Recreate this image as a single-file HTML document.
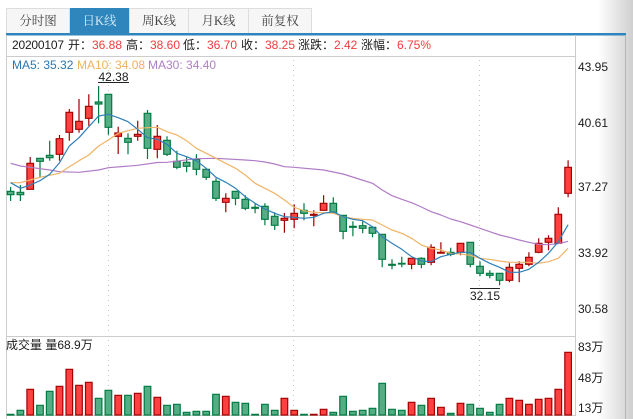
<!DOCTYPE html>
<html><head><meta charset="utf-8"><style>
html,body{margin:0;padding:0;background:#fff}
body{width:633px;height:419px;overflow:hidden;position:relative}
svg{position:absolute;left:0;top:0}
text{font-family:"Liberation Sans","Noto Sans CJK SC",sans-serif;font-size:12px;fill:#1c1c1c}
.t{font-family:"Liberation Serif","Noto Serif CJK SC",serif;font-size:12.5px;fill:#444;text-anchor:middle}
.r{fill:#f03c3c}
</style></head><body>
<svg width="633" height="419" viewBox="0 0 633 419" xmlns="http://www.w3.org/2000/svg">
<defs><linearGradient id="g" x1="0" x2="1" y1="0" y2="0"><stop offset="0" stop-color="#fff"/><stop offset="1" stop-color="#cfcfcf"/></linearGradient></defs>
<rect x="598" y="0" width="35" height="419" fill="url(#g)"/>
<g stroke="#ddd" fill="#f6f6f6">
<rect x="6.5" y="8.5" width="63" height="25"/>
<rect x="129.5" y="8.5" width="59" height="25"/>
<rect x="188.5" y="8.5" width="60" height="25"/>
<rect x="248.5" y="8.5" width="63" height="25"/>
</g>
<rect x="70" y="8" width="59" height="26" fill="#2e86bd"/>
<rect x="6" y="33" width="620" height="2.5" fill="#2e86bd"/>
<path d="M6.5 35V419M575.5 35V416M6 56.5H575M6 336.5H575M6 415.5H575" stroke="#ccc" fill="none"/>
<path d="M625.5 35V419" stroke="#b4b4b4" fill="none"/>
<path d="M108.5 60V333M108.5 340V415M293.5 60V333M293.5 340V415M479.5 60V333M479.5 340V415" stroke="#c4c4c4" stroke-dasharray="1 4" fill="none"/>

<text class="t" x="38" y="25">分时图</text>
<text class="t" x="99.5" y="25" style="fill:#d9ecf7">日K线</text>
<text class="t" x="159" y="25">周K线</text>
<text class="t" x="218.5" y="25">月K线</text>
<text class="t" x="280" y="25">前复权</text>

<text x="12" y="49" textLength="52">20200107</text>
<text x="68" y="49">开：</text><text class="r" x="92" y="49">36.88</text>
<text x="126" y="49">高：</text><text class="r" x="150" y="49">38.60</text>
<text x="183" y="49">低：</text><text class="r" x="207" y="49">36.70</text>
<text x="241" y="49">收：</text><text class="r" x="265" y="49">38.25</text>
<text x="298" y="49">涨跌：</text><text class="r" x="334" y="49">2.42</text>
<text x="361" y="49">涨幅：</text><text class="r" x="397" y="49">6.75%</text>

<text x="12" y="69" style="fill:#2b76ad">MA5: 35.32</text>
<text x="77" y="69" style="fill:#efb25f">MA10: 34.08</text>
<text x="148" y="69" style="fill:#b07fc7">MA30: 34.40</text>

<text x="98.5" y="81">42.38</text>
<path d="M98 82.5H129" stroke="#222"/>
<text x="470" y="300">32.15</text>
<path d="M470 288.5H500" stroke="#222"/>

<text x="578" y="71">43.95</text>
<text x="578" y="127">40.61</text>
<text x="578" y="191">37.27</text>
<text x="578" y="257">33.92</text>
<text x="578" y="313">30.58</text>
<text x="6" y="349">成交量 量68.9万</text>
<text x="578" y="351">83万</text>
<text x="578" y="382">48万</text>
<text x="578" y="412">13万</text>

<!-- red candles -->
<g stroke="#a40000" stroke-width="1.2" fill="#ff4040">
<path d="M30.2 157V189M59.5 135V160.7M69.3 109V140.7M79 99V132.7M88.8 94.3V125.7M118.2 126.7V154M137.7 120.7V140.7M157.3 125V158.3M225.8 193.3V212.3M284.4 213V232.7M294.2 204.3V228.3M313.8 210.3V226.3M323.6 195.3V210.3M411.6 258.3V269.3M431.1 244.3V265.3M440.9 242.3V253.3M460.5 243.3V255.3M509.4 263.3V282.3M519.2 261.3V282.3M528.9 252.3V266.3M538.7 238.3V253.3M548.5 235.3V250.3M558.3 207.3V243.3M568.1 160.3V197.3"/>
<path d="M26.9 163.3h6.6v26h-6.6zM56.2 138.7h6.6v15.6h-6.6zM66 112.3h6.6v20h-6.6zM75.7 121.3h6.6v8h-6.6zM85.5 106.3h6.6v12h-6.6zM114.9 133h6.6v3.3h-6.6zM134.4 134.3h6.6v2h-6.6zM154 136.3h6.6v13h-6.6zM222.5 198.3h6.6v4h-6.6zM281.1 218.3h6.6v2h-6.6zM290.9 213.3h6.6v6h-6.6zM310.5 214.3h6.6v1h-6.6zM320.3 203.3h6.6v7h-6.6zM408.3 258.3h6.6v6h-6.6zM427.8 247.3h6.6v15h-6.6zM437.6 252.3h6.6v.8h-6.6zM457.2 243.3h6.6v9h-6.6zM506.1 267.3h6.6v13h-6.6zM515.9 264.3h6.6v4h-6.6zM525.6 257.3h6.6v7h-6.6zM535.4 243.3h6.6v9h-6.6zM545.2 238.3h6.6v4h-6.6zM555 214.3h6.6v29h-6.6zM564.8 167.3h6.6v26h-6.6z"/>
<!-- red volume -->
<path d="M26.9 389.3h6.6V415h-6.6zM56.2 386.3h6.6V415h-6.6zM66 369.3h6.6V415h-6.6zM75.7 385.3h6.6V415h-6.6zM85.5 382.3h6.6V415h-6.6zM114.9 395.3h6.6V415h-6.6zM134.4 393.3h6.6V415h-6.6zM154 397.3h6.6V415h-6.6zM222.5 396.3h6.6V415h-6.6zM281.1 398.3h6.6V415h-6.6zM290.9 410.3h6.6V415h-6.6zM310.5 414.3h6.6V415h-6.6zM320.3 409.3h6.6V415h-6.6zM408.3 402.3h6.6V415h-6.6zM427.8 398.3h6.6V415h-6.6zM437.6 407.3h6.6V415h-6.6zM457.2 403.3h6.6V415h-6.6zM506.1 398.3h6.6V415h-6.6zM515.9 400.3h6.6V415h-6.6zM525.6 404.3h6.6V415h-6.6zM535.4 399.3h6.6V415h-6.6zM545.2 398.3h6.6V415h-6.6zM555 389.3h6.6V415h-6.6zM564.8 352.3h6.6V415h-6.6z"/>
</g>
<!-- green candles -->
<g stroke="#007a40" stroke-width="1.2" fill="#55ad85">
<path d="M10.6 187V201M20.4 185V201M40 158V177M49.7 140.7V160.7M98.6 86V123.3M108.4 94.3V134.7M128 133.3V154.3M147.5 110V159M167 136.3V156M176.9 150.7V169.3M186.6 157.3V172.3M196.4 154.3V175.3M206.2 168.3V180M216 178.3V201M235.5 191V205.3M245.3 195.3V210.3M255.1 203.3V213.3M264.9 203.3V225.3M274.7 212.3V230M304 203.3V220.3M333.3 197.3V213.3M343.1 215.3V239.3M352.9 221.3V236.3M362.7 221.3V233.3M372.5 227.3V237.3M382.2 234.3V267.3M392 259.3V269.3M401.8 256.7V267.3M421.4 257.3V268.3M450.7 247.7V256.3M470.3 242.3V267.3M480 261.3V276.3M489.8 270.3V278.3M499.6 273.3V285.3"/>
<path d="M7.3 191.3h6.6v3.4h-6.6zM17.1 192.3h6.6v2.4h-6.6zM36.7 158.3h6.6v3h-6.6zM46.4 155.3h6.6v2.4h-6.6zM95.3 102h6.6v2h-6.6zM105.1 94.3h6.6v33h-6.6zM124.7 138.3h6.6v4h-6.6zM144.2 113.3h6.6v35h-6.6zM163.7 140.3h6.6v14h-6.6zM173.6 161.3h6.6v6h-6.6zM183.3 162.3h6.6v4h-6.6zM193.1 159.3h6.6v10h-6.6zM202.9 169.3h6.6v8h-6.6zM212.7 181.3h6.6v17h-6.6zM232.2 191.3h6.6v7h-6.6zM242 199.3h6.6v9h-6.6zM251.8 207.3h6.6v1h-6.6zM261.6 206.3h6.6v13h-6.6zM271.4 216.3h6.6v9h-6.6zM300.7 210.3h6.6v3h-6.6zM330 203.3h6.6v9h-6.6zM339.8 215.3h6.6v16h-6.6zM349.6 226.3h6.6v1h-6.6zM359.4 225.7h6.6v2.6h-6.6zM369.2 227.3h6.6v6h-6.6zM378.9 234.3h6.6v25h-6.6zM388.7 264.3h6.6v1h-6.6zM398.5 263.3h6.6v.7h-6.6zM418.1 258.3h6.6v6h-6.6zM447.4 252.3h6.6v2h-6.6zM467 242.3h6.6v22h-6.6zM476.7 266.3h6.6v7h-6.6zM486.5 273.3h6.6v2h-6.6zM496.3 273.3h6.6v7h-6.6z"/>
<!-- green volume -->
<path d="M7.3 414.3h6.6V415h-6.6zM17.1 410.3h6.6V415h-6.6zM36.7 405.3h6.6V415h-6.6zM46.4 391.3h6.6V415h-6.6zM95.3 398.3h6.6V415h-6.6zM105.1 390.3h6.6V415h-6.6zM124.7 395.3h6.6V415h-6.6zM144.2 386.3h6.6V415h-6.6zM163.7 405.3h6.6V415h-6.6zM173.6 404.3h6.6V415h-6.6zM183.3 412.3h6.6V415h-6.6zM193.1 411.3h6.6V415h-6.6zM202.9 411.3h6.6V415h-6.6zM212.7 394.3h6.6V415h-6.6zM232.2 402.3h6.6V415h-6.6zM242 403.3h6.6V415h-6.6zM251.8 414.3h6.6V415h-6.6zM261.6 404.3h6.6V415h-6.6zM271.4 410.3h6.6V415h-6.6zM300.7 414.3h6.6V415h-6.6zM330 412.3h6.6V415h-6.6zM339.8 396.3h6.6V415h-6.6zM349.6 411.3h6.6V415h-6.6zM359.4 410.3h6.6V415h-6.6zM369.2 408.3h6.6V415h-6.6zM378.9 383.3h6.6V415h-6.6zM388.7 409.3h6.6V415h-6.6zM398.5 410.3h6.6V415h-6.6zM418.1 405.3h6.6V415h-6.6zM447.4 413.3h6.6V415h-6.6zM467 404.3h6.6V415h-6.6zM476.7 408.3h6.6V415h-6.6zM486.5 412.3h6.6V415h-6.6zM496.3 404.3h6.6V415h-6.6z"/>
</g>
<!-- moving averages -->
<g fill="none" stroke-width="1.2" stroke-linejoin="round">
<polyline stroke="#b07cc6" points="10.6,163.3 20.4,166 30.2,167.3 49.7,170 59.5,171.7 79,172.3 98.6,170 108.4,167.7 137.7,165.3 157.3,162.5 167,162.3 196.4,158.7 216,158.3 245.3,160 255.1,160.7 264.9,162 274.7,164 284.4,166.7 294.2,167.3 323.6,170 343.1,174 362,180 372.5,183.3 382.2,190 392,195.7 401.8,199.3 411.6,202.7 421.4,207 431.1,211.7 440.9,215 450.7,219 460.5,221.7 470.3,225 480,228.3 489.8,231.7 499.6,235 509.4,237.3 519.2,240 528.9,242.3 538.7,244.3 548.5,244.7 558.3,243.7 568.1,241.3"/>
<polyline stroke="#efb467" points="10.6,182.7 20.4,182.7 30.2,180 40,177.3 49.7,175.3 59.5,173.3 69.3,166.7 79,160.7 88.8,155 98.6,146 108.4,140 118.2,133.3 128,130.7 137.7,128.3 147.5,127.7 157.3,127.3 167,131.7 176.9,135 186.6,140.7 196.4,148.3 206.2,153.3 216,158.3 225.8,163.3 235.5,168.3 245.3,175 255.1,183.3 264.9,188.3 274.7,193.3 284.4,200 294.2,207.3 304,210.7 313.8,212.3 323.6,212.7 333.3,213.3 343.1,216.7 352.9,218.3 362.7,219.3 372.5,220 382.2,225 392,230 401.8,233.3 411.6,238.3 421.4,245 431.1,248.3 440.9,250 450.7,253.3 460.5,254 470.3,255.3 480,258.3 489.8,259.3 499.6,261 509.4,262.3 519.2,262.3 528.9,262.3 538.7,263.3 548.5,261.7 558.3,258.3 568.1,248.3"/>
<polyline stroke="#2f7fb8" points="10.6,182.7 20.4,188.3 30.2,185 40,180.7 49.7,174.3 59.5,162.7 69.3,146 79,137.7 88.8,126.7 98.6,116 108.4,114.3 118.2,117.7 128,121.7 137.7,129.3 147.5,137.7 157.3,139.3 167,144.3 176.9,153.3 186.6,156.7 196.4,160.7 206.2,168.3 216,177.3 225.8,182.3 235.5,188.3 245.3,196.7 255.1,203.3 264.9,209 274.7,213.3 284.4,216.7 294.2,217.3 304,218.3 313.8,217.3 323.6,213.3 333.3,211.7 343.1,216.7 352.9,219.3 362.7,220.7 372.5,226.7 382.2,236.7 392,243.3 401.8,249.3 411.6,256.7 421.4,261 431.1,261.7 440.9,256.7 450.7,254.3 460.5,252.3 470.3,252.3 480,258.3 489.8,263.3 499.6,267.3 509.4,272.3 519.2,272.3 528.9,269.3 538.7,262.3 548.5,253.3 558.3,241.7 568.1,224.7"/>
</g>
</svg>
</body></html>
